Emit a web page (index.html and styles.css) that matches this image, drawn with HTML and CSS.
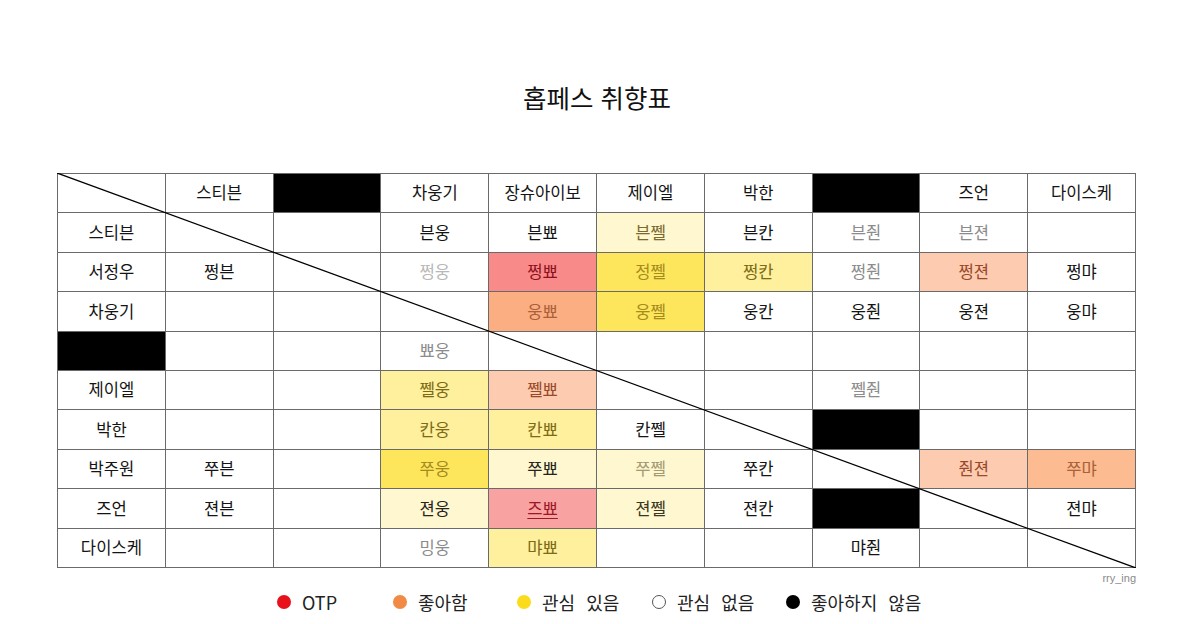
FILE: index.html
```html
<!DOCTYPE html>
<html lang="ko">
<head>
<meta charset="utf-8">
<title>홉페스 취향표</title>
<link rel="stylesheet" href="styles.css">
</head>
<body>
<main class="page">
  <h1 class="title">홉페스 취향표</h1>
  <div class="chart">
    <div class="grid">
      <div class="cell"></div><div class="cell">스티븐</div><div class="cell blk"></div><div class="cell">차웅기</div><div class="cell">장슈아이보</div><div class="cell">제이엘</div><div class="cell">박한</div><div class="cell blk"></div><div class="cell">즈언</div><div class="cell">다이스케</div>

      <div class="cell">스티븐</div><div class="cell"></div><div class="cell"></div><div class="cell">븐웅</div><div class="cell">븐뾰</div><div class="cell vly t-olive">븐쩰</div><div class="cell">븐칸</div><div class="cell t-gray">븐줜</div><div class="cell t-gray">븐젼</div><div class="cell"></div>

      <div class="cell">서정우</div><div class="cell">쩡븐</div><div class="cell"></div><div class="cell t-lgray">쩡웅</div><div class="cell red">쩡뾰</div><div class="cell yel">정쩰</div><div class="cell ly">쩡칸</div><div class="cell t-gray">쩡줜</div><div class="cell peach">쩡젼</div><div class="cell">쩡먀</div>

      <div class="cell">차웅기</div><div class="cell"></div><div class="cell"></div><div class="cell"></div><div class="cell org">웅뾰</div><div class="cell yel">웅쩰</div><div class="cell">웅칸</div><div class="cell">웅줜</div><div class="cell">웅젼</div><div class="cell">웅먀</div>

      <div class="cell blk"></div><div class="cell"></div><div class="cell"></div><div class="cell t-gray">뾰웅</div><div class="cell"></div><div class="cell"></div><div class="cell"></div><div class="cell"></div><div class="cell"></div><div class="cell"></div>

      <div class="cell">제이엘</div><div class="cell"></div><div class="cell"></div><div class="cell ly">쩰웅</div><div class="cell peach">쩰뾰</div><div class="cell"></div><div class="cell"></div><div class="cell t-gray">쩰줜</div><div class="cell"></div><div class="cell"></div>

      <div class="cell">박한</div><div class="cell"></div><div class="cell"></div><div class="cell ly">칸웅</div><div class="cell ly">칸뾰</div><div class="cell">칸쩰</div><div class="cell"></div><div class="cell blk"></div><div class="cell"></div><div class="cell"></div>

      <div class="cell">박주원</div><div class="cell">쭈븐</div><div class="cell"></div><div class="cell yel">쭈웅</div><div class="cell vly">쭈뾰</div><div class="cell vly t-pale">쭈쩰</div><div class="cell">쭈칸</div><div class="cell"></div><div class="cell peach">줜젼</div><div class="cell org2">쭈먀</div>

      <div class="cell">즈언</div><div class="cell">젼븐</div><div class="cell"></div><div class="cell vly">젼웅</div><div class="cell red2">즈뾰</div><div class="cell vly t-dark">젼쩰</div><div class="cell">젼칸</div><div class="cell blk"></div><div class="cell"></div><div class="cell">젼먀</div>

      <div class="cell">다이스케</div><div class="cell"></div><div class="cell"></div><div class="cell t-gray">밍웅</div><div class="cell ly">먀뾰</div><div class="cell"></div><div class="cell"></div><div class="cell">먀줜</div><div class="cell"></div><div class="cell"></div>
    </div>
    <svg class="diag" viewBox="0 0 1079 395" preserveAspectRatio="none" aria-hidden="true">
      <line x1="0" y1="0" x2="1079" y2="395" stroke="#000" stroke-width="1.3"/>
    </svg>
  </div>
  <div class="credit">rry_ing</div>
  <ul class="legend">
    <li class="item"><span class="dot d-red"></span>OTP</li>
    <li class="item"><span class="dot d-org"></span>좋아함</li>
    <li class="item"><span class="dot d-yel"></span>관심 있음</li>
    <li class="item"><span class="dot d-none"></span>관심 없음</li>
    <li class="item"><span class="dot d-blk"></span>좋아하지 않음</li>
  </ul>
</main>
</body>
</html>
```

FILE: styles.css
```css
* { box-sizing: border-box; }

html, body {
  margin: 0;
  padding: 0;
  background: #fff;
}

body {
  font-family: "Noto Sans CJK KR", "Noto Sans", sans-serif;
  color: #111;
}

.page {
  width: 1200px;
  height: 624px;
  padding-top: 80px;
}

.title {
  margin: 0;
  height: 34px;
  line-height: 34px;
  font-size: 25.5px;
  font-weight: 400;
  text-align: center;
  color: #111;
  padding-right: 6px;
}

.chart {
  position: relative;
  width: 1079px;
  height: 395px;
  margin: 59px 0 0 57px;
}

.grid {
  display: grid;
  grid-template-columns: repeat(10, 1fr);
  grid-template-rows: repeat(10, 1fr);
  gap: 1px;
  padding: 1px;
  width: 100%;
  height: 100%;
  background: #6a6a6a;
}

.cell {
  background: #fff;
  display: flex;
  align-items: center;
  justify-content: center;
  font-size: 16.6px;
  line-height: 1;
  color: #141414;
  padding-bottom: 1px;
}

.blk { background: #000; }
.red { background: #f88a8a; color: #8e1020; }
.red2 { background: #f9a2a2; color: #9c1828; text-decoration: underline; text-underline-offset: 3px; }
.org { background: #fbae82; color: #aa6038; }
.org2 { background: #fcbb90; color: #aa6038; }
.peach { background: #fdcbb0; color: #98492a; }
.yel { background: #fde55c; color: #a48c1c; }
.ly { background: #fef09c; color: #7c6a16; }
.vly { background: #fef7d0; color: #262420; }

.t-olive { color: #7a6a2c; }
.t-gray { color: #8c8c8c; }
.t-lgray { color: #b8b8b8; }
.t-pale { color: #a39a72; }
.t-dark { color: #3a3620; }

.diag {
  position: absolute;
  left: 0;
  top: 0;
  width: 100%;
  height: 100%;
  pointer-events: none;
}

.credit {
  width: 1136px;
  margin-top: 3px;
  text-align: right;
  font-family: "Liberation Sans", sans-serif;
  font-size: 11px;
  line-height: 14px;
  color: #8a8a8a;
}

.legend {
  list-style: none;
  margin: 4px 0 0 0;
  padding: 0 0 0 277px;
  display: grid;
  grid-template-columns: 116px 124px 135px 134px auto;
  height: 26px;
  align-items: center;
}

.item {
  display: flex;
  align-items: center;
  gap: 11px;
  font-size: 18px;
  line-height: 26px;
  color: #222;
  word-spacing: 6px;
}

.dot {
  width: 14px;
  height: 14px;
  border-radius: 50%;
  flex: none;
}

.d-red { background: #e8111b; }
.d-org { background: #f08a44; }
.d-yel { background: #fbdc1c; }
.d-none { background: #fff; border: 1px solid #555; }
.d-blk { background: #000; }
```
